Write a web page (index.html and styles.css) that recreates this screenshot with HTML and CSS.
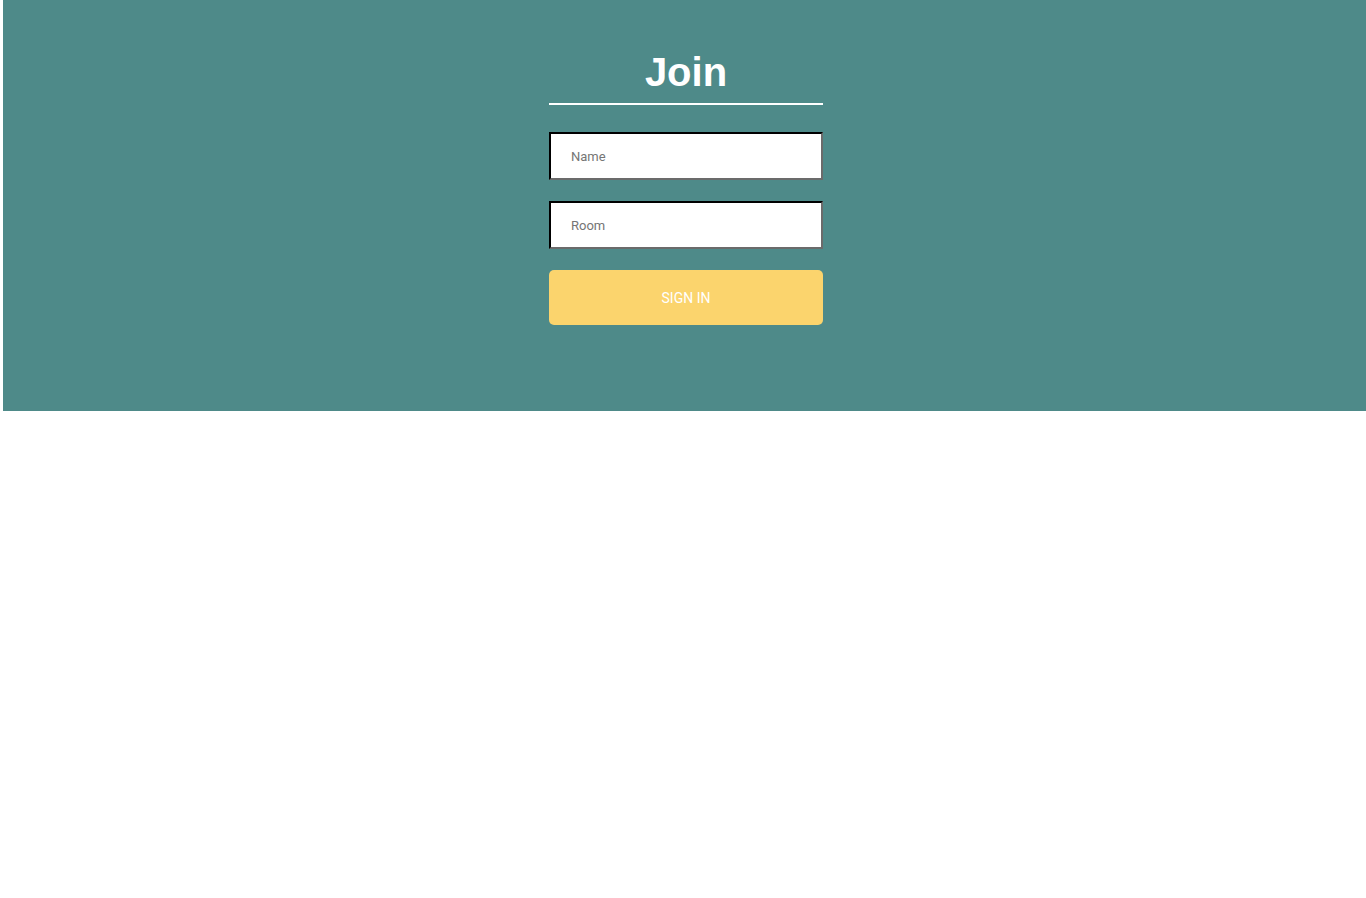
FILE: index.html
```html
<!DOCTYPE html>
<html>
<head>
<meta charset="utf-8">
<title>Join</title>
<link rel="stylesheet" href="styles.css">
</head>
<body>
<div class="page">
  <div class="join-outer">
    <div class="join-inner">
      <h1 class="heading">Join</h1>
      <input class="join-input" type="text" placeholder="Name">
      <input class="join-input" type="text" placeholder="Room">
      <button class="button" type="submit">SIGN IN</button>
    </div>
  </div>
</div>
</body>
</html>
```

FILE: styles.css
```css
html, body {
  margin: 0;
  padding: 0;
  background: #ffffff;
  overflow: hidden;
}

.page {
  padding-left: 3px;
}

.join-outer {
  width: 1366px;
  height: 411px;
  background: #4e8a89;
  display: flex;
  justify-content: center;
}

.join-inner {
  width: 274px;
  display: flex;
  flex-direction: column;
  padding-top: 49px;
}

.heading {
  margin: 0 0 27px 0;
  font-family: "Liberation Sans", Arial, sans-serif;
  font-size: 40px;
  font-weight: bold;
  line-height: 46px;
  color: #ffffff;
  text-align: center;
  padding-bottom: 8px;
  border-bottom: 2px solid #ffffff;
}

.join-input {
  box-sizing: border-box;
  width: 274px;
  height: 48px;
  margin: 0 0 21px 0;
  padding: 0 20px;
  border: 2px inset #767676;
  border-top-color: #1f1f1f;
  border-left-color: #1f1f1f;
  border-right-color: #6b6b6b;
  border-bottom-color: #6b6b6b;
  background: #ffffff;
  font-family: Roboto, "Liberation Sans", sans-serif;
  font-size: 13px;
  color: #333333;
  outline: none;
}

.join-input::placeholder {
  color: #757575;
}

.button {
  box-sizing: border-box;
  width: 274px;
  height: 55px;
  border: none;
  border-radius: 5px;
  background: #fbd46d;
  color: #ffffff;
  font-family: Roboto, "Liberation Sans", sans-serif;
  font-size: 14px;
  padding: 0;
  cursor: pointer;
}
```
